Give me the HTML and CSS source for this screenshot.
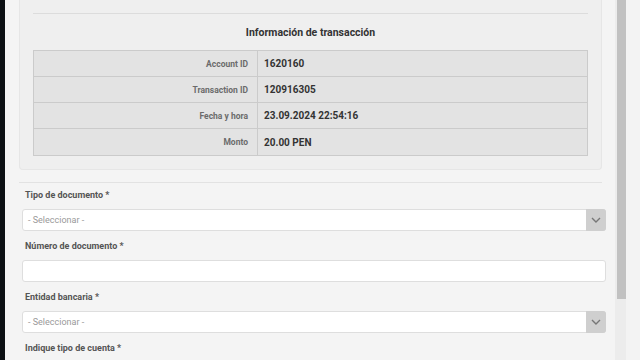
FILE: index.html
```html
<!DOCTYPE html>
<html lang="es">
<head>
  <meta charset="UTF-8">
  <meta name="viewport" content="width=device-width, initial-scale=1.0">
  <title>Retiro</title>
  <link rel="stylesheet" href="styles.css">
</head>
<body>
  <div class="edge"></div>
  <div class="main">
    <div class="panel">
      <hr class="panel-rule">
      <h2 class="panel-title">Información de transacción</h2>
      <table class="info">
        <tr><th>Account ID</th><td>1620160</td></tr>
        <tr><th>Transaction ID</th><td>120916305</td></tr>
        <tr><th>Fecha y hora</th><td>23.09.2024 22:54:16</td></tr>
        <tr><th>Monto</th><td>20.00 PEN</td></tr>
      </table>
    </div>
    <hr class="rule">
    <div class="form">
      <div class="field">
        <label>Tipo de documento *</label>
        <div class="select">
          <span class="placeholder">- Seleccionar -</span>
          <span class="arrow"><svg width="10" height="6" viewBox="0 0 10 6"><path d="M1 1l4 4 4-4" fill="none" stroke="#777" stroke-width="1.4"/></svg></span>
        </div>
      </div>
      <div class="field">
        <label>Número de documento *</label>
        <div class="input"></div>
      </div>
      <div class="field">
        <label>Entidad bancaria *</label>
        <div class="select">
          <span class="placeholder">- Seleccionar -</span>
          <span class="arrow"><svg width="10" height="6" viewBox="0 0 10 6"><path d="M1 1l4 4 4-4" fill="none" stroke="#777" stroke-width="1.4"/></svg></span>
        </div>
      </div>
      <div class="field">
        <label>Indique tipo de cuenta *</label>
        <div class="input"></div>
      </div>
    </div>
  </div>
  <div class="scrollbar"><div class="thumb"></div></div>
  <div class="side"></div>
</body>
</html>
```

FILE: styles.css
```css
body {
  margin: 0;
  height: 360px;
  overflow: hidden;
  display: flex;
  font-family: Roboto, "Liberation Sans", sans-serif;
  background-color: #f4f4f4;
  color: #333;
}
.edge {
  width: 5px;
  background-color: #0c1013;
}
.main {
  flex: 1;
  overflow: hidden;
}
.panel {
  margin: 0 13px 0 14px;
  padding: 13px 13px 13px;
  background-color: #efefef;
  border: 1px solid #e6e6e6;
  border-top: none;
  border-radius: 0 0 4px 4px;
}
.panel-rule {
  margin: 0;
  border: none;
  border-top: 1px solid #dcdcdc;
}
.panel-title {
  margin: 12px 0 10px;
  font-size: 10.5px;
  line-height: 14px;
  text-align: center;
  color: #333;
}
.info {
  width: 100%;
  border-collapse: collapse;
  background-color: #e3e3e3;
}
.info th, .info td {
  height: 25px;
  padding: 0;
  border: 1px solid #cbcbcb;
}
.info tr:last-child th, .info tr:last-child td {
  height: 26px;
}
.info th {
  width: 214px;
  padding-right: 9px;
  text-align: right;
  font-size: 8.5px;
  color: #6b6b6b;
}
.info td {
  padding-left: 6px;
  font-size: 10px;
  font-weight: bold;
  color: #333;
}
.rule {
  margin: 12px 13px 0 14px;
  border: none;
  border-top: 1px solid #e2e2e2;
}
.form {
  padding: 0 9px 0 17px;
}
.field label {
  display: block;
  margin: 6px 0 8px 3px;
  font-size: 9px;
  line-height: 12px;
  font-weight: bold;
  color: #555;
}
.field + .field label {
  margin-top: 9px;
}
.select, .input {
  height: 20px;
  background-color: #fff;
  border: 1px solid #dedede;
  border-radius: 3px;
  display: flex;
  align-items: center;
}
.placeholder {
  flex: 1;
  padding-left: 5px;
  font-size: 9px;
  color: #999;
}
.arrow {
  width: 20px;
  height: 22px;
  margin: -1px -1px -1px 0;
  background-color: #cfcfcf;
  border-radius: 0 3px 3px 0;
  display: flex;
  align-items: center;
  justify-content: center;
}
.scrollbar {
  width: 9px;
  padding-left: 2px;
  background-color: #ececec;
}
.thumb {
  width: 9px;
  height: 299px;
  background-color: #c1c1c1;
}
.side {
  width: 14px;
  background-color: #f3f3f3;
}
```
